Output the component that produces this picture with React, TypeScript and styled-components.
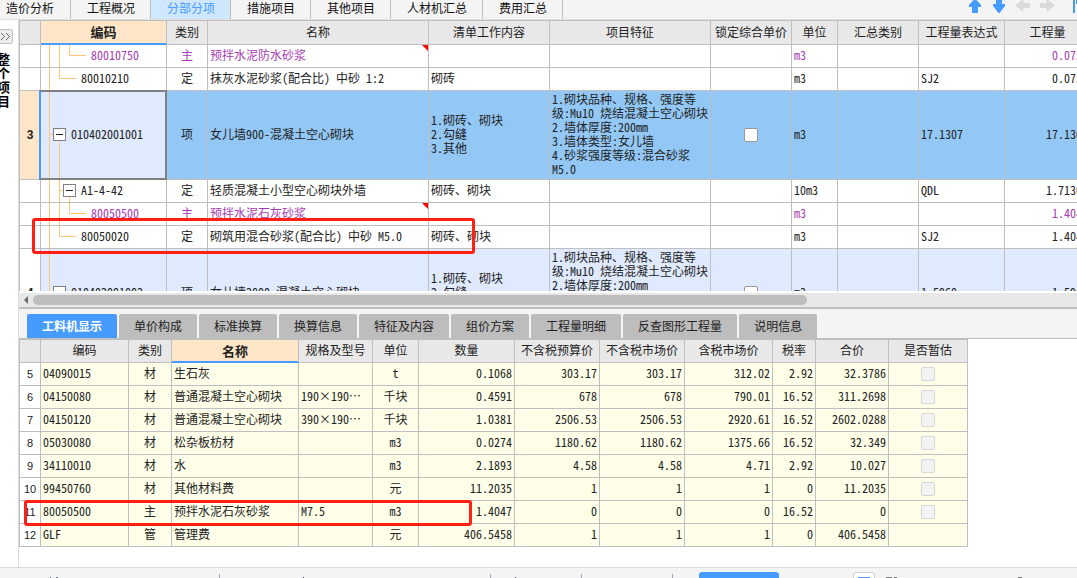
import React from "react";
import styled, { createGlobalStyle, css } from "styled-components";

const line = "#bfbfbf";
const blue = "#459bff";
const ink = "#222222";
const peach = "#ffe6c8";
const mono = `"Noto Sans Mono CJK SC", "Noto Sans CJK SC", monospace`;
const sans = `"Noto Sans CJK SC", "Liberation Sans", sans-serif`;

const GlobalStyle = createGlobalStyle`
  *, *::before, *::after { box-sizing: border-box; }
  body { margin: 0; background: #fff; color: ${ink}; font: 12px/14px ${sans}; overflow: hidden; }
  button { font: inherit; color: inherit; border: 0; padding: 0; margin: 0; background: none; }
`;

const Page = styled.div`
  display: flex;
  flex-direction: column;
  height: 100vh;
  overflow: hidden;
`;

const TopBar = styled.header`
  display: flex;
  flex: none;
  height: 20px;
  background: #f4f4f4;
  border-bottom: 1px solid #dedede;
`;

const TopTab = styled.button<{ $active?: boolean; $first?: boolean }>`
  padding: ${(p) => (p.$first ? "0 16px 4px 6px" : "0 15px 4px 16px")};
  border-right: 1px solid ${line};
  line-height: 15px;
  white-space: nowrap;
  color: ${(p) => (p.$active ? blue : "#111")};
  background: ${(p) => (p.$active ? "#cfe7ff" : "transparent")};
`;

const ArrowGroup = styled.div`
  display: flex;
  margin-left: auto;
`;

const IconButton = styled.button<{ $narrow?: boolean }>`
  display: flex;
  justify-content: ${(p) => (p.$narrow ? "flex-end" : "center")};
  width: ${(p) => (p.$narrow ? "18px" : "24px")};
  height: 14px;
`;

const Body = styled.div`
  display: flex;
  flex: 1;
  min-height: 0;
`;

const Sidebar = styled.aside`
  flex: none;
  width: 19px;
  border-right: 1px solid #dcdcdc;
  overflow: hidden;
`;

const ExpandButton = styled.button`
  display: flex;
  align-items: center;
  width: 13px;
  height: 15px;
  margin-top: 9px;
  border: 1px solid ${line};
  border-left: 0;
  border-radius: 0 3px 3px 0;
  background: #ececec;
`;

const SideLabel = styled.div`
  width: 14px;
  margin: 8px 0 0 -3px;
  font-size: 13px;
  font-weight: 700;
  line-height: 14px;
  color: #000;
  word-break: break-all;
`;

const Main = styled.main`
  display: flex;
  flex: 1;
  flex-direction: column;
  min-width: 0;
`;

const TopPane = styled.section`
  position: relative;
  flex: 1;
  min-height: 0;
  overflow: hidden;
`;

const BottomPane = styled.section`
  position: relative;
  flex: none;
  padding-bottom: 20px;
  border-top: 1px solid ${line};
`;

const Grid = styled.table`
  table-layout: fixed;
  width: 0;
  border-collapse: separate;
  border-spacing: 0;
  border-top: 1px solid ${line};
  border-left: 1px solid ${line};
  font-family: ${mono};
`;

const Th = styled.th<{ $active?: boolean; $h: number }>`
  height: ${(p) => p.$h}px;
  padding: 0 0 ${(p) => (p.$active ? 0 : 2)}px;
  overflow: hidden;
  white-space: nowrap;
  font-weight: ${(p) => (p.$active ? 700 : 400)};
  font-size: ${(p) => (p.$active ? 13 : 12)}px;
  background: ${(p) => (p.$active ? peach : "#e8e8e8")};
  border-right: 1px solid ${line};
  border-bottom: ${(p) => (p.$active ? `2px solid ${blue}` : `1px solid ${line}`)};
`;

const Td = styled.td<{
  $align?: "left" | "center" | "right";
  $bg?: string;
  $tall?: boolean;
  $purple?: boolean;
  $focus?: boolean;
  $tree?: boolean;
}>`
  position: relative;
  height: ${(p) => (p.$tall ? 89 : 23)}px;
  padding: ${(p) => (p.$tree ? "0" : "0 2px 2px")};
  white-space: pre;
  text-align: ${(p) => p.$align ?? "left"};
  background: ${(p) => p.$bg ?? "#fff"};
  color: ${(p) => (p.$purple ? "#a73bb4" : ink)};
  border-right: 1px solid ${line};
  border-bottom: 1px solid ${line};
  ${(p) =>
    p.$focus &&
    css`
      &::after {
        content: "";
        position: absolute;
        z-index: 1;
        inset: -1px -1px -1px -2px;
        border: 2px solid #808080;
        border-left-color: ${blue};
      }
    `}
`;

const NumCell = styled.td<{ $active?: boolean; $bold?: boolean }>`
  padding: 0;
  text-align: center;
  font-family: "Liberation Sans", sans-serif;
  font-size: ${(p) => (p.$bold ? 12 : 11)}px;
  font-weight: ${(p) => (p.$bold ? 700 : 400)};
  background: ${(p) => (p.$active ? peach : "#fff")};
  border-right: 1px solid ${line};
  border-bottom: 1px solid ${line};
`;

const TreeCell = styled.div`
  display: flex;
  align-items: center;
`;

const Code = styled.span`
  padding-bottom: 2px;
`;

const TreeSvg = styled.svg`
  display: block;
  flex: none;
`;

const NoteCorner = styled.svg`
  position: absolute;
  top: 0;
  right: 0;
`;

const Check = styled.input`
  display: block;
  appearance: none;
  width: 14px;
  height: 14px;
  margin: 2px auto 0;
  border: 1px solid #999;
  border-radius: 2px;
  background: #fff;
  &:disabled {
    border-color: #d6d6d6;
    background: #f3f3f3;
  }
`;

const ScrollStrip = styled.div`
  display: flex;
  flex: none;
  align-items: center;
  gap: 5px;
  height: 18px;
  padding-left: 5px;
  background: #e8e8e8;
  border-top: 2px solid #fff;
  border-bottom: 2px solid ${line};
`;

const ScrollThumb = styled.div`
  width: 73.5%;
  height: 10px;
  border-radius: 5px;
  background: #bdbdbd;
`;

const DetailTabs = styled.nav`
  display: flex;
  flex: none;
  gap: 2px;
  padding: 5px 8px 0;
  background: #f4f4f4;
`;

const DetailTab = styled.button<{ $active?: boolean }>`
  height: 24px;
  padding: 0 15px;
  border-radius: 2px 2px 0 0;
  white-space: nowrap;
  font-weight: ${(p) => (p.$active ? 700 : 400)};
  color: ${(p) => (p.$active ? "#fff" : "#222")};
  background: ${(p) => (p.$active ? blue : "#bdbdbd")};
`;

const RedFrame = styled.div<{ $x: number; $y: number; $w: number; $h: number }>`
  position: absolute;
  z-index: 2;
  left: ${(p) => p.$x}px;
  top: ${(p) => p.$y}px;
  width: ${(p) => p.$w}px;
  height: ${(p) => p.$h}px;
  border: 3px solid #ff2013;
  border-radius: 3px;
  pointer-events: none;
`;

const Footer = styled.footer`
  display: flex;
  flex: none;
  height: 11px;
  overflow: hidden;
  background: #f4f4f4;
  border-top: 1px solid #d9d9d9;
`;

const StatusPart = styled.div<{ $w: number }>`
  display: flex;
  align-items: flex-end;
  justify-content: center;
  width: ${(p) => p.$w}px;
`;

const Divider = styled.div`
  width: 1px;
  margin-top: 6px;
  background: #a0a6b4;
`;

const StatusButton = styled.button`
  width: 80px;
  height: 24px;
  margin: 4px 0 0 26px;
  border-radius: 3px;
  background: ${blue};
`;

const StatusIcon = styled.button`
  display: flex;
  justify-content: center;
  width: 22px;
  height: 24px;
  margin: 4px 10px 0 74px;
  padding-top: 4px;
  border: 1px solid #cfcfcf;
  border-radius: 3px;
  background: #fff;
`;

const Marks = styled.svg`
  display: block;
  align-self: flex-end;
`;

type Level = "leaf2" | "leaf3" | "item" | "sub";

function Tree({ level, h }: { level: Level; h: number }) {
  const m = Math.floor(h / 2);
  const indent = level === "leaf3" ? 50 : level === "item" ? 30 : 40;
  const paths: Record<Level, string> = {
    leaf3: `M8.5 0V${h} M18.5 0V${h} M28.5 0V${m - 0.5} H45`,
    leaf2: `M8.5 0V${h} M18.5 0V${m - 0.5} H35`,
    item: `M8.5 0V${h} M8.5 ${m - 0.5}H13 M18.5 ${m + 6}V${h}`,
    sub: `M8.5 0V${h} M18.5 0V${h} M18.5 ${m - 0.5}H23 M28.5 ${m + 6}V${h}`,
  };
  const box = level === "item" ? 12 : level === "sub" ? 22 : null;
  return (
    <TreeSvg width={indent} height={h} viewBox={`0 0 ${indent} ${h}`} fill="none">
      <path d={paths[level]} stroke="#ffc67a" />
      {box !== null && (
        <>
          <rect x={box + 0.5} y={m - 6.5} width="12" height="12" fill="#fff" stroke="#808080" />
          <path d={`M${box + 3} ${m - 0.5}h7`} stroke="#222" />
        </>
      )}
    </TreeSvg>
  );
}

const billCols = [21, 126, 41, 221, 121, 161, 81, 46, 81, 86, 86];
const billHead = ["", "编码", "类别", "名称", "清单工作内容", "项目特征", "锁定综合单价", "单位", "汇总类别", "工程量表达式", "工程量"];

interface BillRow {
  no?: string;
  level: Level;
  code: string;
  kind: string;
  name: string;
  work?: string;
  feature?: string;
  unit: string;
  expr?: string;
  qty: string;
  purple?: boolean;
  note?: boolean;
  selected?: boolean;
}

const work3 = "1.砌砖、砌块\n2.勾缝\n3.其他";
const feature3 =
  "1.砌块品种、规格、强度等\n级:Mu10 烧结混凝土空心砌块\n2.墙体厚度:200mm\n3.墙体类型:女儿墙\n4.砂浆强度等级:混合砂浆\nM5.0";

const billRows: BillRow[] = [
  { level: "leaf3", code: "80010750", kind: "主", name: "预拌水泥防水砂浆", unit: "m3", qty: "0.0754", purple: true, note: true },
  { level: "leaf2", code: "80010210", kind: "定", name: "抹灰水泥砂浆(配合比) 中砂 1:2", work: "砌砖", unit: "m3", expr: "SJ2", qty: "0.0754" },
  { no: "3", level: "item", code: "010402001001", kind: "项", name: "女儿墙900-混凝土空心砌块", work: work3, feature: feature3, unit: "m3", expr: "17.1307", qty: "17.1307", selected: true },
  { level: "sub", code: "A1-4-42", kind: "定", name: "轻质混凝土小型空心砌块外墙", work: "砌砖、砌块", unit: "10m3", expr: "QDL", qty: "1.71307" },
  { level: "leaf3", code: "80050500", kind: "主", name: "预拌水泥石灰砂浆", unit: "m3", qty: "1.4047", purple: true, note: true },
  { level: "leaf2", code: "80050020", kind: "定", name: "砌筑用混合砂浆(配合比) 中砂 M5.0", work: "砌砖、砌块", unit: "m3", expr: "SJ2", qty: "1.4047" },
  { no: "4", level: "item", code: "010402001002", kind: "项", name: "女儿墙2000-混凝土空心砌块", work: work3, feature: feature3, unit: "m3", expr: "1.5960", qty: "1.5960" },
];

function BillLine({ row }: { row: BillRow }) {
  const tall = row.level === "item";
  const bg = row.selected ? "#93c8f6" : tall ? "#dfeafe" : "#fff";
  const shared = { $tall: tall, $bg: bg, $purple: row.purple };
  return (
    <tr>
      <NumCell $active={row.selected} $bold>{row.no}</NumCell>
      <Td {...shared} $tree $bg={tall ? "#dfeafe" : "#fff"} $focus={row.selected}>
        <TreeCell>
          <Tree level={row.level} h={tall ? 88 : 22} />
          <Code>{row.code}</Code>
        </TreeCell>
      </Td>
      <Td {...shared} $align="center">{row.kind}</Td>
      <Td {...shared}>
        {row.name}
        {row.note && (
          <NoteCorner width="6" height="6" viewBox="0 0 6 6">
            <path d="M0 0H6V6Z" fill="#f00" />
          </NoteCorner>
        )}
      </Td>
      <Td {...shared}>{row.work}</Td>
      <Td {...shared}>{row.feature}</Td>
      <Td {...shared}>{tall && <Check type="checkbox" aria-label="锁定综合单价" />}</Td>
      <Td {...shared}>{row.unit}</Td>
      <Td {...shared} />
      <Td {...shared}>{row.expr}</Td>
      <Td {...shared} $align="right">{row.qty}</Td>
    </tr>
  );
}

const resCols = [21, 88, 43, 127, 74, 46, 96, 85, 85, 88, 43, 73, 79];
const resHead = ["", "编码", "类别", "名称", "规格及型号", "单位", "数量", "不含税预算价", "不含税市场价", "含税市场价", "税率", "合价", "是否暂估"];
const resRows = [
  ["5", "04090015", "材", "生石灰", "", "t", "0.1068", "303.17", "303.17", "312.02", "2.92", "32.3786"],
  ["6", "04150080", "材", "普通混凝土空心砌块", "190×190…", "千块", "0.4591", "678", "678", "790.01", "16.52", "311.2698"],
  ["7", "04150120", "材", "普通混凝土空心砌块", "390×190…", "千块", "1.0381", "2506.53", "2506.53", "2920.61", "16.52", "2602.0288"],
  ["8", "05030080", "材", "松杂板枋材", "", "m3", "0.0274", "1180.62", "1180.62", "1375.66", "16.52", "32.349"],
  ["9", "34110010", "材", "水", "", "m3", "2.1893", "4.58", "4.58", "4.71", "2.92", "10.027"],
  ["10", "99450760", "材", "其他材料费", "", "元", "11.2035", "1", "1", "1", "0", "11.2035"],
  ["11", "80050500", "主", "预拌水泥石灰砂浆", "M7.5", "m3", "1.4047", "0", "0", "0", "16.52", "0"],
  ["12", "GLF", "管", "管理费", "", "元", "406.5458", "1", "1", "1", "0", "406.5458"],
];

const cream = "#ffffe9";
const alignOf = (i: number) => (i >= 6 ? "right" : i === 2 || i === 5 ? "center" : "left");

const Cols = ({ widths }: { widths: number[] }) => (
  <colgroup>
    {widths.map((w, i) => (
      <col key={i} width={w} />
    ))}
  </colgroup>
);

const topTabs = ["造价分析", "工程概况", "分部分项", "措施项目", "其他项目", "人材机汇总", "费用汇总"];
const detailTabs = ["工料机显示", "单价构成", "标准换算", "换算信息", "特征及内容", "组价方案", "工程量明细", "反查图形工程量", "说明信息"];

export default function App() {
  return (
    <Page>
      <GlobalStyle />
      <TopBar>
        {topTabs.map((t, i) => (
          <TopTab key={t} $first={i === 0} $active={i === 2}>{t}</TopTab>
        ))}
        <ArrowGroup>
          <IconButton aria-label="上移">
            <svg width="12" height="13" viewBox="0 0 12 13"><path d="M3 13V7H0V5L4.500 0H7.500L12 5V7H9V13Z" fill={blue} /></svg>
          </IconButton>
          <IconButton aria-label="下移">
            <svg width="12" height="13" viewBox="0 0 12 13"><path d="M3 0H9V4H12V6L6.500 13H5.500L0 6V4H3Z" fill={blue} /></svg>
          </IconButton>
          <IconButton aria-label="左移">
            <svg width="16" height="12" viewBox="0 0 16 12"><path d="M0 5.500L7 0H8.500V3H15V8H8.500V11H7Z" fill="#dadada" /></svg>
          </IconButton>
          <IconButton aria-label="右移">
            <svg width="16" height="12" viewBox="0 0 16 12"><path d="M16 5.500L9 0H7.500V3H1V8H7.500V11H9Z" fill="#dadada" /></svg>
          </IconButton>
          <IconButton $narrow aria-label="更多">
            <svg width="5" height="13" viewBox="0 0 5 13"><path d="M1 0H3V13H1ZM4 0H5V4H4Z" fill={blue} /></svg>
          </IconButton>
        </ArrowGroup>
      </TopBar>
      <Body>
        <Sidebar>
          <ExpandButton aria-label="展开">
            <svg width="11" height="9" viewBox="0 0 11 9" fill="none" stroke="#666"><path d="M1 1L4.500 4.500L1 8M6 1L9.500 4.500L6 8" /></svg>
          </ExpandButton>
          <SideLabel>整个项目</SideLabel>
        </Sidebar>
        <Main>
          <TopPane>
            <Grid>
              <Cols widths={billCols} />
              <thead>
                <tr>
                  {billHead.map((h, i) => (
                    <Th key={i} $h={24} $active={i === 1}>{h}</Th>
                  ))}
                </tr>
              </thead>
              <tbody>
                {billRows.map((r, i) => (
                  <BillLine key={i} row={r} />
                ))}
              </tbody>
            </Grid>
            <RedFrame $x={13} $y={198} $w={443} $h={36} />
          </TopPane>
          <ScrollStrip>
            <svg width="4" height="8" viewBox="0 0 4 8"><path d="M4 0V8L0 4Z" fill="#6c6c6c" /></svg>
            <ScrollThumb />
          </ScrollStrip>
          <DetailTabs>
            {detailTabs.map((t, i) => (
              <DetailTab key={t} $active={i === 0}>{t}</DetailTab>
            ))}
          </DetailTabs>
          <BottomPane>
            <Grid>
              <Cols widths={resCols} />
              <thead>
                <tr>
                  {resHead.map((h, i) => (
                    <Th key={i} $h={23} $active={i === 3}>{h}</Th>
                  ))}
                </tr>
              </thead>
              <tbody>
                {resRows.map((r) => (
                  <tr key={r[0]}>
                    {r.map((v, i) =>
                      i === 0 ? (
                        <NumCell key={i}>{v}</NumCell>
                      ) : (
                        <Td key={i} $bg={cream} $align={alignOf(i)}>{v}</Td>
                      )
                    )}
                    <Td $bg={cream}>{r[0] !== "12" && <Check type="checkbox" disabled aria-label="是否暂估" />}</Td>
                  </tr>
                ))}
              </tbody>
            </Grid>
            <RedFrame $x={5} $y={161} $w={448} $h={26} />
          </BottomPane>
        </Main>
      </Body>
      <Footer>
        <StatusPart $w={219}>
          <Marks width="120" height="1"><path d="M0 .5h1M6 .5h2" stroke="#5a6a80" /></Marks>
        </StatusPart>
        <Divider />
        <StatusPart $w={270}>
          <Marks width="104" height="1"><path d="M0 .5h1" stroke="#445" /></Marks>
        </StatusPart>
        <Divider />
        <StatusPart $w={90}>
          <Marks width="42" height="1"><path d="M0 .5h1" stroke="#445" /></Marks>
        </StatusPart>
        <Divider />
        <StatusPart $w={90} />
        <Divider />
        <StatusButton aria-label="状态" />
        <StatusIcon aria-label="视图">
          <svg width="12" height="12" viewBox="0 0 12 12"><path d="M0 0H12V12H0Z" fill={blue} /></svg>
        </StatusIcon>
        <Marks width="138" height="1"><path d="M1 .5h6M9 .5h3M133 .5h4" stroke="#777" /></Marks>
      </Footer>
    </Page>
  );
}
